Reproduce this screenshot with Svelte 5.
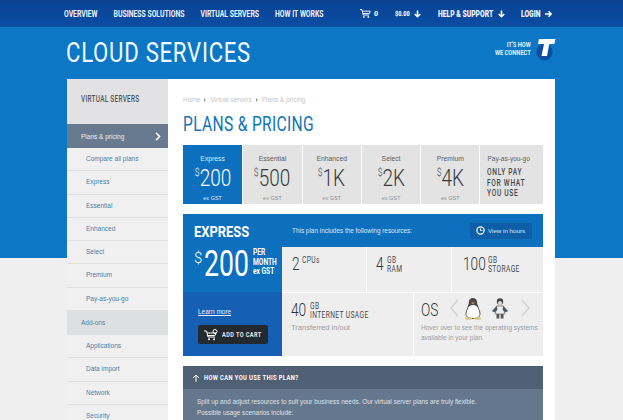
<script>
  const navL = ['OVERVIEW', 'BUSINESS SOLUTIONS', 'VIRTUAL SERVERS', 'HOW IT WORKS'];
  const sub1 = ['Compare all plans', 'Express', 'Essential', 'Enhanced', 'Select', 'Premium', 'Pay-as-you-go'];
  const sub2 = ['Applications', 'Data import', 'Network', 'Security'];
  const plans = [
    { n: 'Express', p: '200', on: true },
    { n: 'Essential', p: '500' },
    { n: 'Enhanced', p: '1K' },
    { n: 'Select', p: '2K' },
    { n: 'Premium', p: '4K' }
  ];
</script>

<div class="page">
  <nav class="nav">
    <div class="nav-l">
      {#each navL as n}<span>{n}</span>{/each}
    </div>
    <div class="nav-r">
      <span class="cart">
        <svg width="11" height="11" viewBox="0 0 14 12" fill="none" stroke="#fff" stroke-width="1.200"><path d="M0 1h2.500l1.500 7h7.500M3 3h10l-1 3H3.700"/><circle cx="5" cy="10.400" r="1.100" fill="#fff" stroke="none"/><circle cx="10.500" cy="10.400" r="1.100" fill="#fff" stroke="none"/></svg>
        <b>0</b>
      </span>
      <span class="amt"><b class="sq">$0.00</b><svg class="ar" width="7" height="8" viewBox="0 0 9 9" fill="none" stroke="#fff" stroke-width="2"><path d="M4.500 0v8M1 4.500l3.500 3.500 3.500-3.500"/></svg></span>
      <span class="help"><b class="sq">HELP &amp; SUPPORT</b><svg class="ar" width="7" height="8" viewBox="0 0 9 9" fill="none" stroke="#fff" stroke-width="2"><path d="M4.500 0v8M1 4.500l3.500 3.500 3.500-3.500"/></svg></span>
      <span class="login"><b class="sq">LOGIN</b><svg class="ar" width="7" height="8" viewBox="0 0 9 9" fill="none" stroke="#fff" stroke-width="2"><path d="M0 4.500h8M4.500 1l3.500 3.500L4.500 8"/></svg></span>
    </div>
  </nav>

  <header class="head">
    <h1>CLOUD SERVICES</h1>
    <div class="brand">
      <div class="tag">IT'S HOW<br />WE CONNECT</div>
      <svg width="20" height="24" viewBox="0 0 20 24">
        <ellipse cx="8.500" cy="14" rx="8" ry="8.500" fill="#0c4f9e" />
        <path d="M3 1h16.500l-1.200 5h-5L11 18H5.500L8 6H2z" fill="#fff" />
      </svg>
    </div>
  </header>

  <div class="sheet">
    <aside class="side">
      <div class="side-title"><span>VIRTUAL SERVERS</span></div>
      <div class="side-on">Plans &amp; pricing
        <svg width="6" height="9" viewBox="0 0 6 9" fill="none" stroke="#fff" stroke-width="1.600"><path d="M1 .8l3.600 3.700L1 8.200"/></svg>
      </div>
      {#each sub1 as s}<div class="side-item">{s}</div>{/each}
      <div class="side-group">Add-ons</div>
      {#each sub2 as s}<div class="side-item">{s}</div>{/each}
    </aside>

    <main class="main">
      <div class="crumbs">Home<i></i>Virtual servers<i></i>Plans &amp; pricing</div>
      <h2>PLANS &amp; PRICING</h2>

      <div class="tabs">
        {#each plans as p}
          <div class="tab" class:on={p.on}>
            <div class="t-name">{p.n}</div>
            <div class="t-price"><sup>$</sup>{p.p}</div>
            <div class="t-gst">ex GST</div>
          </div>
        {/each}
        <div class="tab payg">
          <div class="t-name">Pay-as-you-go</div>
          <div class="t-only">ONLY PAY<br />FOR WHAT<br />YOU USE</div>
        </div>
      </div>

      <section class="plan">
        <div class="left">
          <div class="left-top">
            <div class="p-name">EXPRESS</div>
            <div class="p-price"><sup>$</sup><span>200</span><small>PER<br />MONTH<br />ex GST</small></div>
          </div>
          <div class="left-bot">
            <a href="#top" class="learn">Learn more</a>
            <div class="addcart">
              <svg width="15" height="12" viewBox="0 0 15 12" fill="none" stroke="#fff" stroke-width="1"><path d="M0 2h2.500l1.500 6h7M3 4h9l-1 2.500H3.600"/><circle cx="11" cy="2.500" r="2"/><circle cx="5" cy="10.200" r="1" fill="#fff" stroke="none"/><circle cx="10" cy="10.200" r="1" fill="#fff" stroke="none"/></svg>
              <span>ADD TO CART</span>
            </div>
          </div>
        </div>
        <div class="right">
          <div class="r-head">
            <span>This plan includes the following resources:</span>
            <div class="hours">
              <svg width="9" height="9" viewBox="0 0 10 10" fill="none" stroke="#fff" stroke-width="1.400"><circle cx="5" cy="5" r="4"/><path d="M5 2.600V5h2.200" stroke-width="1"/></svg>
              View in hours
            </div>
          </div>
          <div class="r-row1">
            <div class="cell c1"><span class="big w1">2</span><span class="unit"><span>CPUs</span></span></div>
            <div class="cell c2"><span class="big w1">4</span><span class="unit"><span>GB<br />RAM</span></span></div>
            <div class="cell c3"><span class="big w3">100</span><span class="unit"><span>GB<br />STORAGE</span></span></div>
          </div>
          <div class="r-row2">
            <div class="cell2 usage">
              <div class="line"><span class="big w2">40</span><span class="unit"><span>GB<br />INTERNET USAGE</span></span></div>
              <p>Transferred in/out</p>
            </div>
            <div class="cell2 os">
              <div class="line">
                <span class="big w2">OS</span>
                <svg class="os-icons" width="80" height="24" viewBox="0 0 80 24" fill="none">
                  <path d="M8 3L1 11l7 8" stroke="#cfcfcf" stroke-width="1.200"/>
                  <path d="M72 3l7 8-7 8" stroke="#cfcfcf" stroke-width="1.200"/>
                  <path d="M23 2c-2.500 0-3.500 2-3.500 4.500 0 2.500-3.500 6-3.500 10 0 3 2 5 7 5s7-2 7-5c0-4-3.500-7.500-3.500-10C26.500 4 25.500 2 23 2z" fill="#fff" stroke="#555" stroke-width="1"/>
                  <path d="M23 1c-3 0-4.200 2.500-4.200 5 0 1.500-.8 3-1.800 4.500 2-1 3.500-2.500 6-2.500s4 1.500 6 2.500c-1-1.500-1.800-3-1.800-4.500 0-2.500-1.200-5-4.200-5z" fill="#4a4a4a"/>
                  <path d="M21 5.500h4l-2 1.600z" fill="#d9b04a"/>
                  <ellipse cx="18.500" cy="21.500" rx="3.500" ry="1.200" fill="#d9c27a"/>
                  <ellipse cx="27.500" cy="21.500" rx="3.500" ry="1.200" fill="#d9c27a"/>
                  <circle cx="50" cy="4.500" r="3.200" fill="#444"/>
                  <circle cx="50" cy="6" r="2" fill="#ddd"/>
                  <path d="M46.500 9h7l1 8h-9z" fill="#eee" stroke="#666" stroke-width=".8"/>
                  <path d="M46.500 9l-4.500 5 2.500 1.500 3-3zM53.500 9l4.500 5-2.500 1.500-3-3z" fill="#4c5760"/>
                  <path d="M46.500 17h2.800v4.500h-2.800zM50.700 17h2.800v4.500h-2.800z" fill="#555"/>
                </svg>
              </div>
              <p>Hover over to see the operating systems<br />available in your plan</p>
            </div>
          </div>
        </div>
      </section>

      <section class="acc">
        <div class="acc-head">
          <svg width="8" height="8" viewBox="0 0 8 8" fill="none" stroke="#fff" stroke-width="1"><path d="M4 8V1M1 4l3-3 3 3"/></svg>
          <span>HOW CAN YOU USE THIS PLAN?</span>
        </div>
        <div class="acc-body">Split up and adjust resources to suit your business needs. Our virtual server plans are truly flexible.<br />Possible usage scenarios include:</div>
      </section>
    </main>
  </div>
</div>

<style>
  :global(body) { margin: 0; }
  .page {
    --cond: "Roboto", sans-serif;
    width: 623px; height: 420px; overflow: hidden;
    display: flex; flex-direction: column;
    font-family: "Liberation Sans", Arial, sans-serif;
    background: linear-gradient(#0b77c5 0, #0b77c5 258px, #efefef 258px);
  }
  .nav {
    flex: none; height: 27px; box-sizing: border-box; padding: 0 71px 0 64px;
    display: flex; justify-content: space-between; align-items: center;
    background: linear-gradient(#0b4191, #0a4ea6);
    color: #eef4fb; font: bold 9px var(--cond); white-space: nowrap;
  }
  .nav-l { display: flex; gap: 21px; width: 257px; transform: scaleX(.76); transform-origin: left; flex: none; }
  .nav-r { display: flex; align-items: center; }
  .nav-r span { display: flex; align-items: center; }
  .sq { display: inline-block; transform: scaleX(.75); transform-origin: left; }
  .ar { margin-left: 4px; }
  .cart b { font-size: 7px; margin-left: 3px; width: 4px; }
  .amt { margin-left: 17px; }
  .amt b { font-size: 7.500px; width: 15px; }
  .help { margin-left: 17px; }
  .help b { width: 56px; }
  .login { margin-left: 16px; }
  .login b { width: 20px; }

  .head {
    flex: none; height: 52px; box-sizing: border-box; padding: 0 67px 0 66px;
    display: flex; justify-content: space-between; align-items: flex-start;
  }
  h1 {
    margin: 9px 0 0; color: #f4f9fd; font: 400 27px/34px "Roboto", sans-serif;
    letter-spacing: .9px; transform: scaleX(.82); transform-origin: left; white-space: nowrap;
  }
  .brand { display: flex; align-items: flex-start; gap: 5px; margin-top: 11px; }
  .tag { color: #e6f1fa; font: bold 7px/7.500px var(--cond); text-align: right; margin-top: 4px; transform: scaleX(.82); transform-origin: right; white-space: nowrap; }

  .sheet {
    flex: none; width: 488px; margin-left: 67px; display: flex; height: 341px;
    background: #fff;
  }
  .side { flex: none; width: 101px; background: #f0f0f0; }
  .side-title {
    height: 45px; box-sizing: border-box; padding: 14px 0 0 14px; background: #e2e2e4;
    color: #50555a; font: 500 8.500px/12px var(--cond); letter-spacing: .4px; white-space: nowrap;
  }
  .side-title span { display: inline-block; transform: scaleX(.75); transform-origin: left; }
  .side-on {
    height: 24px; box-sizing: border-box; padding: 0 7px 0 14px; background: #677a8e;
    display: flex; align-items: center; justify-content: space-between;
    color: #e8edf1; font-size: 6.500px;
  }
  .side-item {
    height: 23.300px; box-sizing: border-box; padding-left: 19px; line-height: 22px;
    color: #4a7fa6; font-size: 6.500px; border-bottom: 1px solid #e0e0e0;
  }
  .side-group {
    height: 24px; box-sizing: border-box; padding-left: 14px; line-height: 23px;
    background: #dedfe0; color: #4a7fa6; font-size: 6.500px;
  }

  .main { flex: 1; box-sizing: border-box; padding: 0 12px 0 15px; min-width: 0; }
  .crumbs {
    margin-top: 16px; height: 10px; color: #c3c7ca; font-size: 6.500px; line-height: 10px;
    display: flex; align-items: center;
  }
  .crumbs i { width: 0; height: 0; margin: 0 4px; border-left: 2.500px solid #999; border-top: 2px solid transparent; border-bottom: 2px solid transparent; }
  h2 {
    margin: 7px 0 0; height: 33px; color: #1274b8; font: 400 20px/25px "Roboto", sans-serif; letter-spacing: .4px;
    transform: scaleX(.78); transform-origin: left;
    white-space: nowrap;
  }
  .tabs { display: flex; gap: 1px; height: 59px; }
  .tab {
    flex: 0 0 58.300px; background: #e3e3e3; text-align: center; color: #34383c;
    display: flex; flex-direction: column; align-items: center;
  }
  .tab.on { flex-basis: 59.300px; background: #0d70bf; color: #fff; margin-right: 0; }
  .t-name { margin-top: 9px; font-size: 6.800px; line-height: 10px; color: #5b5f63; }
  .on .t-name { color: #dcebf7; }
  .t-price {
    height: 27px; font: 300 24px/28px "Roboto", sans-serif; transform: scaleX(.79); white-space: nowrap;
  }
  .t-price sup { font-size: 11px; vertical-align: 10px; line-height: 0; }
  .t-gst { margin-top: 3px; font-size: 5.500px; line-height: 8px; color: #8b8f93; }
  .on .t-gst { color: #dcebf7; }
  .payg { flex: 1; align-items: flex-start; padding-left: 7px; text-align: left; }
  .payg .t-name { font-size: 6.500px; }
  .t-only { margin-top: 3px; font: 500 8.500px/10.500px var(--cond); color: #44484c; letter-spacing: .9px; white-space: nowrap; transform: scaleX(.78); transform-origin: left; }

  .plan { margin-top: 10px; height: 142px; display: flex; background: #fff; }
  .left { flex: none; width: 99px; display: flex; flex-direction: column; color: #fff; }
  .left-top { height: 78px; background: #0d70bf; box-sizing: border-box; padding: 10px 0 0 11px; }
  .p-name { font: bold 15px/16px "Roboto", sans-serif; transform: scaleX(.86); transform-origin: left; }
  .p-price { display: flex; align-items: flex-start; height: 36px; margin-top: 6px; }
  .p-price sup { font: 300 15px/18px "Roboto", sans-serif; margin-top: 3px; }
  .p-price span { font: 400 37px/36px "Roboto", sans-serif; transform: scaleX(.72); transform-origin: left; margin-left: 2px; width: 49px; }
  .p-price small { font: bold 8.500px/9.500px var(--cond); margin-top: 2px; white-space: nowrap; transform: scaleX(.78); transform-origin: left; }
  .left-bot { flex: 1; background: #1560b5; box-sizing: border-box; padding: 15px 0 0 15px; }
  .learn { display: block; color: #e6eff8; font-size: 6.500px; line-height: 10px; text-decoration: underline; }
  .addcart {
    margin-top: 8px; width: 70px; height: 19px; border-radius: 2px; background: #23292e;
    display: flex; align-items: center; gap: 3px; box-sizing: border-box; padding-left: 6px;
    color: #e8e8e8; font: bold 7px var(--cond); letter-spacing: .5px; white-space: nowrap;
  }
  .addcart svg { flex: none; }
  .addcart span { display: inline-block; transform: scaleX(.8); transform-origin: left; }
  .right { flex: 1; display: flex; flex-direction: column; min-width: 0; }
  .r-head {
    height: 33px; background: #0d70bf; display: flex; justify-content: space-between; align-items: center;
    box-sizing: border-box; padding: 0 11px 0 10px; color: #dbe9f5; font-size: 6.400px;
  }
  .hours {
    width: 62px; height: 16px; box-sizing: border-box; padding-left: 6px; background: #0f5fa8;
    display: flex; align-items: center; gap: 3px; color: #dbe9f5; font-size: 6.200px; white-space: nowrap;
  }
  .r-row1 { display: flex; height: 45px; gap: 1px; }
  .cell { background: #eeeeef; display: flex; box-sizing: border-box; padding: 5px 0 0 10px; gap: 2px; }
  .c1 { width: 84px; }
  .c2 { width: 84px; padding-left: 9px; }
  .c3 { flex: 1; padding-left: 11px; }
  .big { font: 300 19px/24px "Roboto", sans-serif; color: #30343a; transform: scaleX(.72); transform-origin: left; display: inline-block; white-space: nowrap; }
  .w1 { width: 8px; }
  .c2 .w1 { width: 9px; }
  .w2 { width: 17px; }
  .w3 { width: 23px; }
  .unit { font: 400 8.500px/8.500px var(--cond); color: #45494e; letter-spacing: .5px; white-space: nowrap; margin-top: 4px; }
  .unit span { display: inline-block; transform: scaleX(.78); transform-origin: left; }
  .r-row2 { display: flex; flex: 1; gap: 1px; margin-top: 1px; }
  .cell2 { background: #eeeeef; box-sizing: border-box; padding: 5px 0 0 9px; }
  .usage { width: 131px; }
  .os { flex: 1; padding-left: 7px; }
  .line { display: flex; gap: 2px; height: 22px; align-items: flex-start; }
  .cell2 p { margin: 3px 0 0; color: #9a9da1; font-size: 6.500px; line-height: 10px; white-space: nowrap; }
  .usage p { font-size: 7.500px; }
  .os .big { width: 18px; }
  .os-icons { margin-left: 9px; margin-top: -1px; flex: none; }

  .acc { margin-top: 10px; color: #fff; }
  .acc-head {
    height: 23px; background: #4f6074; display: flex; align-items: center; gap: 4px;
    box-sizing: border-box; padding-left: 9px;
    font: bold 7.500px var(--cond); letter-spacing: .5px; white-space: nowrap;
  }
  .acc-head span { display: inline-block; transform: scaleX(.77); transform-origin: left; }
  .acc-body {
    height: 31px; background: #64778c; box-sizing: border-box; padding: 8px 0 0 14px;
    color: #dfe4e9; font-size: 6.400px; line-height: 10.500px; white-space: nowrap;
  }
</style>
